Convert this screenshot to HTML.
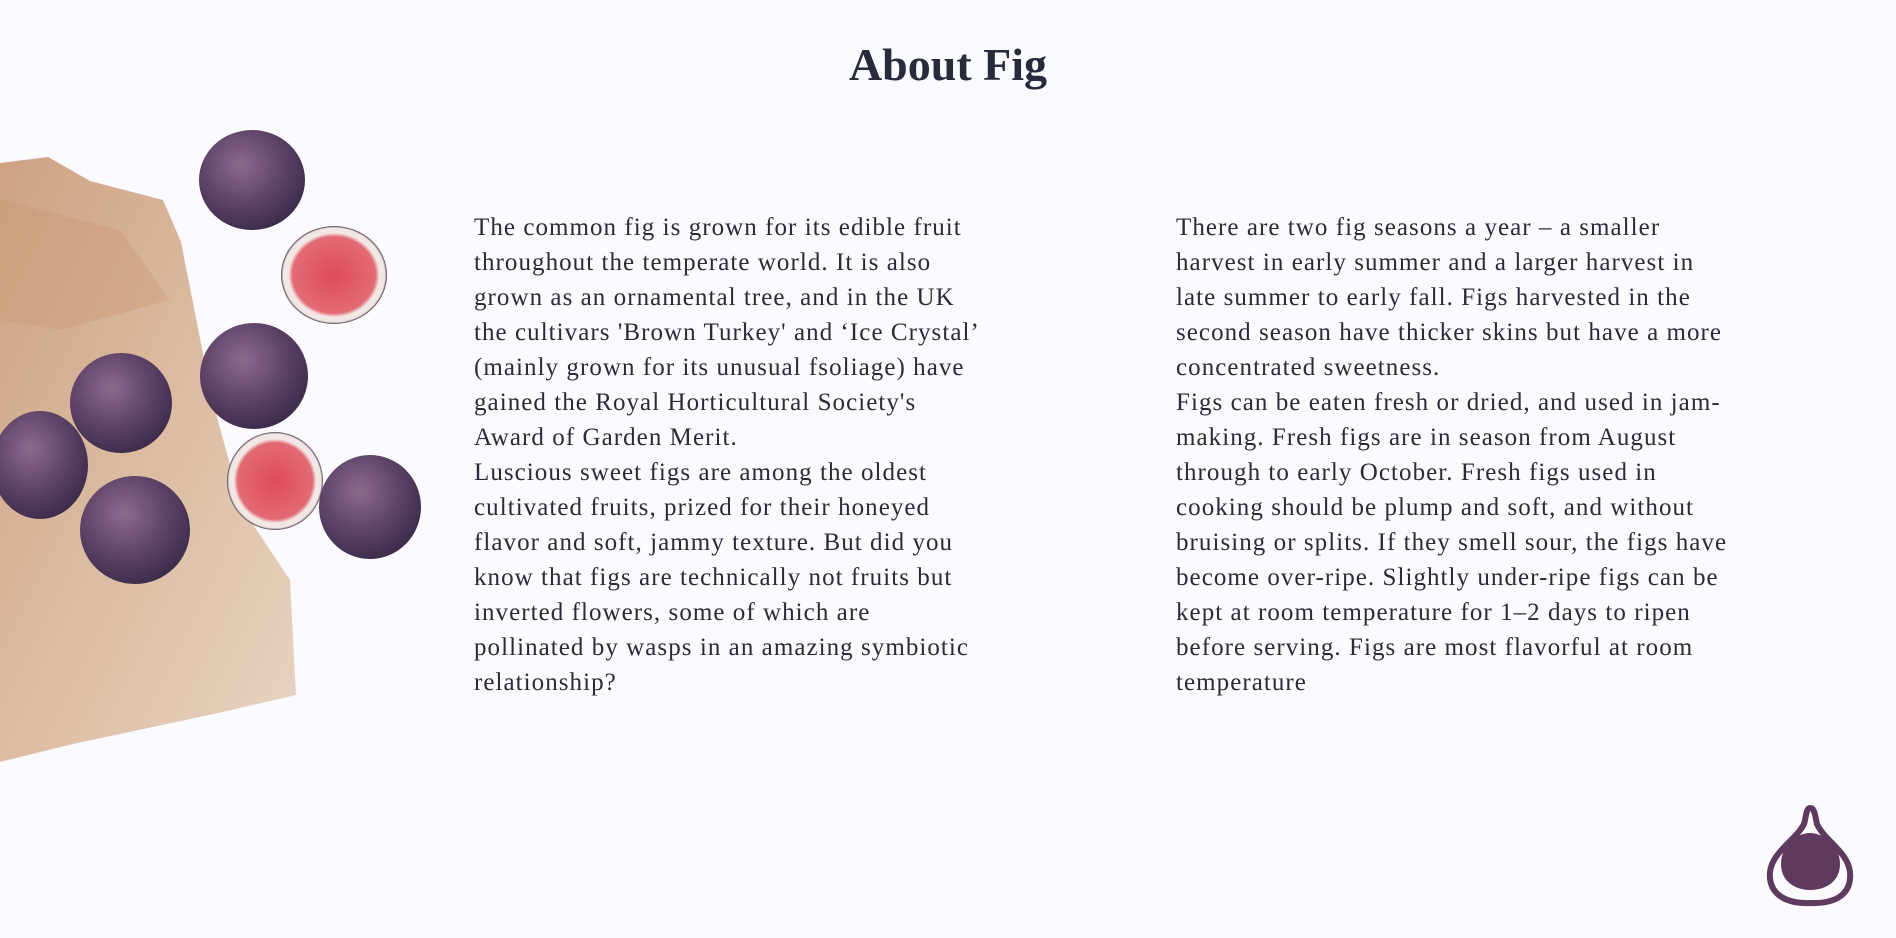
<!DOCTYPE html>
<html><head><meta charset="utf-8"><style>
html,body{margin:0;padding:0;background:#fbfaff;width:1896px;height:938px;overflow:hidden;position:relative;font-family:"Liberation Serif",serif;color:#2a2b37}
h1{position:absolute;left:0;width:1896px;top:38px;margin:0;text-align:center;font-size:46px;font-weight:bold;color:#272b3b}
.col{position:absolute;top:210px;font-size:25px;letter-spacing:1.05px;line-height:35px;white-space:nowrap}
.col p{margin:0}
#img{position:absolute;left:0;top:120px}
#logo{position:absolute;left:1760px;top:800px}
</style></head><body>
<h1>About Fig</h1>
<svg id="img" width="440" height="680" viewBox="0 120 440 680">
<defs>
<radialGradient id="fg" cx="40%" cy="35%" r="70%"><stop offset="0" stop-color="#8c6a8e"/><stop offset="0.6" stop-color="#5a4064"/><stop offset="1" stop-color="#3a2a48"/></radialGradient>
<radialGradient id="fl" cx="50%" cy="50%" r="50%"><stop offset="0" stop-color="#e04a5a"/><stop offset="0.78" stop-color="#e26a74"/><stop offset="0.86" stop-color="#f3e8e6"/><stop offset="0.96" stop-color="#f0e6e4"/><stop offset="1" stop-color="#4a3a48"/></radialGradient>
<linearGradient id="pp" x1="0" y1="0" x2="1" y2="1"><stop offset="0" stop-color="#cda283"/><stop offset="0.5" stop-color="#dcbca2"/><stop offset="1" stop-color="#e8d4c2"/></linearGradient>
</defs>
<polygon points="0,163 48,157 90,181 163,200 181,242 212,399 242,508 290,580 296,695 218,713 73,744 0,762" fill="url(#pp)"/>
<polygon points="0,200 120,230 170,300 60,330 0,320" fill="#c9946f" opacity="0.35"/>
<ellipse cx="252" cy="180" rx="53" ry="50" fill="url(#fg)"/>
<ellipse cx="334" cy="275" rx="53" ry="49" fill="url(#fl)"/>
<ellipse cx="254" cy="376" rx="54" ry="53" fill="url(#fg)"/>
<ellipse cx="121" cy="403" rx="51" ry="50" fill="url(#fg)"/>
<ellipse cx="40" cy="465" rx="48" ry="54" fill="url(#fg)"/>
<ellipse cx="135" cy="530" rx="55" ry="54" fill="url(#fg)"/>
<ellipse cx="275" cy="481" rx="48" ry="49" fill="url(#fl)"/>
<ellipse cx="370" cy="507" rx="51" ry="52" fill="url(#fg)"/>
</svg>
<div class="col" style="left:474px"><p>The common fig is grown for its edible fruit<br>throughout the temperate world. It is also<br>grown as an ornamental tree, and in the UK<br>the cultivars 'Brown Turkey' and ‘Ice Crystal’<br>(mainly grown for its unusual fsoliage) have<br>gained the Royal Horticultural Society's<br>Award of Garden Merit.</p><p>Luscious sweet figs are among the oldest<br>cultivated fruits, prized for their honeyed<br>flavor and soft, jammy texture. But did you<br>know that figs are technically not fruits but<br>inverted flowers, some of which are<br>pollinated by wasps in an amazing symbiotic<br>relationship?</p></div>
<div class="col" style="left:1176px"><p>There are two fig seasons a year – a smaller<br>harvest in early summer and a larger harvest in<br>late summer to early fall. Figs harvested in the<br>second season have thicker skins but have a more<br>concentrated sweetness.</p><p>Figs can be eaten fresh or dried, and used in jam-<br>making. Fresh figs are in season from August<br>through to early October. Fresh figs used in<br>cooking should be plump and soft, and without<br>bruising or splits. If they smell sour, the figs have<br>become over-ripe. Slightly under-ripe figs can be<br>kept at room temperature for 1–2 days to ripen<br>before serving. Figs are most flavorful at room<br>temperature</p></div>
<svg id="logo" width="100" height="115" viewBox="0 0 100 115">
<path d="M50 8 C46 8 46 18 44 24 C36 40 12 52 10 72 C8 94 26 104 50 103 C76 104 92 94 90 72 C88 52 64 40 57 24 C55 16 55 8 50 8 Z" fill="none" stroke="#5e3b5e" stroke-width="6"/>
<path d="M50 33 C36 33 21 46 21 64 C21 82 36 90 50 90 C65 90 80 82 80 64 C80 46 64 33 50 33 Z" fill="#5e3b5e"/>
</svg>
</body></html>
